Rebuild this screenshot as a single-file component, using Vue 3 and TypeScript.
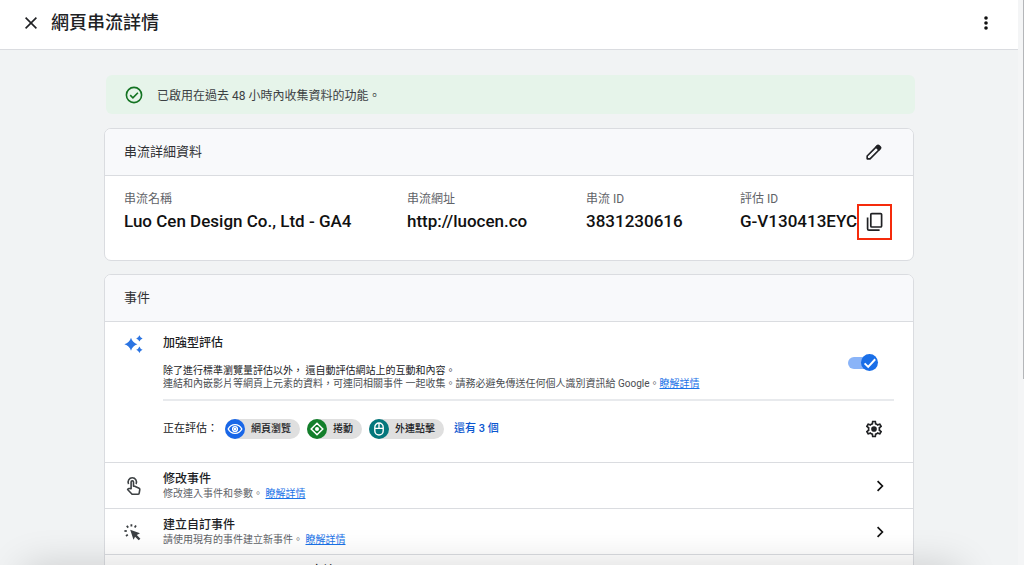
<script setup lang="ts">
import { ref } from 'vue'

interface StreamField {
  label: string
  value: string
}

interface EventRow {
  icon: 'touch' | 'click' | 'key'
  title: string
  text: string
}

const fields: StreamField[] = [
  { label: '串流名稱', value: 'Luo Cen Design Co., Ltd - GA4' },
  { label: '串流網址', value: 'http://luocen.co' },
  { label: '串流 ID', value: '3831230616' },
]
const measurementId = 'G-V130413EYC'

const chips = [
  { kind: 'view', label: '網頁瀏覽' },
  { kind: 'scroll', label: '捲動' },
  { kind: 'outbound', label: '外連點擊' },
]

const rows: EventRow[] = [
  { icon: 'touch', title: '修改事件', text: '修改連入事件和參數。' },
  { icon: 'click', title: '建立自訂事件', text: '請使用現有的事件建立新事件。' },
  { icon: 'key', title: 'Measurement Protocol API 密鑰', text: '' },
]

const enhanced = ref(true)
</script>

<template>
  <div class="page">
    <div class="content">
      <header class="topbar">
        <button class="icon-btn" type="button" aria-label="關閉">
          <svg width="16" height="16" viewBox="0 0 16 16"><path d="M2.6 2.6 13.4 13.4M13.4 2.6 2.6 13.4" fill="none" stroke="#202124" stroke-width="1.6" /></svg>
        </button>
        <h1>網頁串流詳情</h1>
        <button class="icon-btn more" type="button" aria-label="更多選項">
          <svg width="16" height="16" viewBox="0 0 16 16" fill="#111"><circle cx="8" cy="3" r="1.8" /><circle cx="8" cy="8" r="1.8" /><circle cx="8" cy="13" r="1.8" /></svg>
        </button>
      </header>

      <main>
        <div class="banner" role="status">
          <svg width="18" height="18" viewBox="0 0 18 18" fill="none" stroke="#137322" stroke-width="1.6"><circle cx="9" cy="9" r="7.6" /><path d="m5.2 9.2 2.7 2.6 5-5.1" /></svg>
          <span>已啟用在過去 48 小時內收集資料的功能。</span>
        </div>

        <section class="card details">
          <div class="card-head">
            <h2>串流詳細資料</h2>
            <button class="icon-btn" type="button" aria-label="編輯">
              <svg width="18" height="18" viewBox="0 0 20 20" fill="none" stroke="#202124" stroke-width="1.8" stroke-linejoin="round"><path d="M2.4 17.6v-3.2L13.9 2.9q.8-.7 1.5 0l1.7 1.7q.7.7 0 1.5L5.6 17.6z" /><path d="m12.4 4.6 3 3 1.6-1.7-3-3z" fill="#202124" /></svg>
            </button>
          </div>
          <dl class="fields">
            <div v-for="f in fields" :key="f.label">
              <dt>{{ f.label }}</dt>
              <dd>{{ f.value }}</dd>
            </div>
            <div class="measure">
              <div>
                <dt>評估 ID</dt>
                <dd>{{ measurementId }}</dd>
              </div>
              <button class="copy" type="button" aria-label="複製評估 ID">
                <svg width="20" height="20" viewBox="0 0 20 20" fill="none" stroke="#202124" stroke-width="1.7"><rect x="5.8" y="1.6" width="10.8" height="13.4" rx="1" /><path d="M2.6 5.6v11.2q0 1.4 1.4 1.4H14.6" /></svg>
              </button>
            </div>
          </dl>
        </section>

        <section class="card">
          <div class="card-head">
            <h2>事件</h2>
          </div>

          <div class="enhanced">
            <svg class="lead" width="20" height="20" viewBox="0 0 20 20" fill="#2b74e2"><path d="M7 3.8Q8.4 8.6 13.4 10.2 8.4 11.8 7 16.8 5.6 11.8.4 10.2 5.6 8.6 7 3.8z" /><path d="M15.4 1.2q.8 2.4 3.2 3.2-2.4.8-3.2 3.2-.8-2.4-3.2-3.2 2.4-.8 3.2-3.2zM15.4 12.6q.8 2.4 3.2 3.2-2.4.8-3.2 3.2-.8-2.4-3.2-3.2 2.4-.8 3.2-3.2z" /></svg>
            <div class="enhanced-body">
              <div class="intro">
                <div>
                  <h3>加強型評估</h3>
                  <p><span class="strong">除了進行標準瀏覽量評估以外， 還自動評估網站上的互動和內容。</span><br>連結和內嵌影片等網頁上元素的資料，可連同相關事件 一起收集。請務必避免傳送任何個人識別資訊給 Google。<a href="#">瞭解詳情</a></p>
                </div>
                <label class="toggle">
                  <input v-model="enhanced" type="checkbox" aria-label="加強型評估">
                  <span class="knob">
                    <svg width="16" height="16" viewBox="0 0 16 16"><path d="m2.6 8.4 3.6 3.5 7-7.6" fill="none" stroke="#fff" stroke-width="2" /></svg>
                  </span>
                </label>
              </div>
              <div class="measuring">
                <span>正在評估：</span>
                <ul>
                  <li v-for="c in chips" :key="c.kind">
                    <span class="dot" :class="c.kind">
                      <svg v-if="c.kind === 'view'" width="16" height="16" viewBox="0 0 16 16" fill="none" stroke="#fff" stroke-width="1.4"><path d="M1.2 8Q3.4 3.6 8 3.6T14.8 8Q12.6 12.4 8 12.4T1.2 8z" /><circle cx="8" cy="8" r="2.4" /><circle cx="8" cy="8" r=".6" fill="#fff" /></svg>
                      <svg v-else-if="c.kind === 'scroll'" width="16" height="16" viewBox="0 0 16 16" fill="none" stroke="#fff" stroke-width="1.5"><path d="M5 5.2 8 2.2l3 3M10.8 5 13.8 8l-3 3M11 10.8l-3 3-3-3M5.2 11l-3-3 3-3" /><circle cx="8" cy="8" r="2" fill="#fff" stroke="none" /></svg>
                      <svg v-else width="16" height="16" viewBox="0 0 16 16" fill="none" stroke="#fff" stroke-width="1.4"><rect x="3.8" y="2" width="8.4" height="12" rx="4.2" /><path d="M3.8 7.4h8.4M8 2v5.4" /></svg>
                    </span>
                    {{ c.label }}
                  </li>
                </ul>
                <button class="text-btn" type="button">還有 3 個</button>
                <button class="icon-btn gear" type="button" aria-label="設定">
                  <svg width="20" height="20" viewBox="0 0 24 24" fill="#202124"><path d="M19.43 12.98c.04-.32.07-.64.07-.98s-.03-.66-.07-.98l2.11-1.65c.19-.15.24-.42.12-.64l-2-3.46c-.09-.16-.26-.25-.44-.25-.06 0-.12.01-.17.03l-2.49 1c-.52-.4-1.08-.73-1.69-.98l-.38-2.65C14.46 2.18 14.25 2 14 2h-4c-.25 0-.46.18-.49.42l-.38 2.65c-.61.25-1.17.59-1.69.98l-2.49-1c-.06-.02-.12-.03-.18-.03-.17 0-.34.09-.43.25l-2 3.46c-.13.22-.07.49.12.64l2.11 1.65c-.04.32-.07.65-.07.98s.03.66.07.98l-2.11 1.65c-.19.15-.24.42-.12.64l2 3.46c.09.16.26.25.44.25.06 0 .12-.01.17-.03l2.49-1c.52.4 1.08.73 1.69.98l.38 2.65c.03.24.24.42.49.42h4c.25 0 .46-.18.49-.42l.38-2.65c.61-.25 1.17-.59 1.69-.98l2.49 1c.06.02.12.03.18.03.17 0 .34-.09.43-.25l2-3.46c.12-.22.07-.49-.12-.64l-2.11-1.65zm-1.98-1.71c.04.31.05.52.05.73s-.02.43-.05.73l-.14 1.13.89.7 1.08.84-.7 1.21-1.27-.51-1.04-.42-.9.68c-.43.32-.84.56-1.25.73l-1.06.43-.16 1.13-.2 1.35h-1.4l-.19-1.35-.16-1.13-1.06-.43c-.43-.18-.83-.41-1.23-.71l-.91-.7-1.06.43-1.27.51-.7-1.21 1.08-.84.89-.7-.14-1.13c-.03-.31-.05-.54-.05-.74s.02-.43.05-.73l.14-1.13-.89-.7-1.08-.84.7-1.21 1.27.51 1.04.42.9-.68c.43-.32.84-.56 1.25-.73l1.06-.43.16-1.13.2-1.35h1.39l.19 1.35.16 1.13 1.06.43c.43.18.83.41 1.23.71l.91.7 1.06-.43 1.27-.51.7 1.21-1.07.85-.89.7.14 1.13z" /><circle cx="12" cy="12" r="3.4" /></svg>
                </button>
              </div>
            </div>
          </div>

          <div v-for="r in rows" :key="r.title" class="row">
            <svg v-if="r.icon === 'touch'" class="lead" width="20" height="20" viewBox="0 0 20 20" fill="none" stroke="#3c4043" stroke-width="1.6" stroke-linejoin="round"><path d="M4.6 8a4.2 4.2 0 1 1 7.4 0" /><path d="M7.1 12.6V5.9q0-1.2 1.2-1.2t1.2 1.2v4.3h1.2l4.4 2q.9.5.7 1.5l-.6 3.4q-.2 1.2-1.4 1.2H8.9q-.8 0-1.3-.6l-4-4.2.7-.8q.4-.3.9-.2z" /></svg>
            <svg v-else-if="r.icon === 'click'" class="lead" width="20" height="20" viewBox="0 0 20 20" fill="#3c4043"><path d="m6.2 7.8 9.8 3.5-3.2 1.8 3.6 3.6-1.7 1.6-3.6-3.6-1.6 3z" /><path d="M7.4 2.2v2.4M2.8 3.8l1.4 1.8M12 3.6l-1.3 1.9M.4 8.8l2.4.4M2 14l1.8-1.4" fill="none" stroke="#3c4043" stroke-width="1.8" /></svg>
            <svg v-else class="lead" width="20" height="20" viewBox="0 0 20 20" fill="none" stroke="#3c4043" stroke-width="1.6"><circle cx="6" cy="10" r="3.4" /><path d="M9.4 10H18v3.4M14.6 10v3" /></svg>
            <div class="row-text">
              <h3>{{ r.title }}</h3>
              <p>{{ r.text }} <a href="#">瞭解詳情</a></p>
            </div>
            <button class="icon-btn" type="button" :aria-label="r.title">
              <svg width="16" height="16" viewBox="0 0 16 16"><path d="m5.6 3.2 4.8 4.8-4.8 4.8" fill="none" stroke="#111" stroke-width="1.7" /></svg>
            </button>
          </div>
        </section>
      </main>
    </div>
    <div class="rail"><div class="thumb"></div></div>
    <div class="shade"></div>
  </div>
</template>

<style>
body {
  margin: 0;
  overflow: hidden;
}
</style>

<style scoped>
.page {
  position: relative;
  display: grid;
  grid-template-columns: minmax(0, 1fr) 6px;
  height: 100vh;
  overflow: hidden;
  background: #f1f3f4;
  color: #202124;
  font-family: Roboto, "Noto Sans CJK TC", sans-serif;
}
.content {
  overflow: hidden;
}
h1, h2, h3, p, dl, dd, ul {
  margin: 0;
  padding: 0;
}
button {
  border: 0;
  padding: 0;
  background: none;
  font: inherit;
  cursor: pointer;
}
svg {
  display: block;
  flex: none;
}
a {
  color: #1a73e8;
}
.icon-btn {
  display: flex;
  flex: none;
}
.topbar {
  display: flex;
  align-items: center;
  gap: 12px;
  height: 50px;
  padding: 0 24px 4px 23px;
  box-sizing: border-box;
  background: #fff;
  border-bottom: 1px solid #dadce0;
}
h1 {
  font-size: 18px;
  line-height: 24px;
  font-weight: 500;
}
.more {
  margin-left: auto;
}
main {
  max-width: 810px;
  margin: 0 auto;
  padding-top: 25px;
}
.banner {
  display: flex;
  align-items: center;
  gap: 14px;
  height: 39px;
  margin: 0 -1px 14px 2px;
  padding: 0 19px;
  border-radius: 6px;
  background: #e6f4ea;
  color: #3c4043;
  font-size: 12px;
}
.card {
  margin-bottom: 13px;
  border: 1px solid #dadce0;
  border-radius: 7px;
  background: #fff;
  overflow: hidden;
}
.card-head {
  display: flex;
  align-items: center;
  justify-content: space-between;
  height: 46px;
  padding: 0 30px 0 19px;
  background: #f8f9fb;
  border-bottom: 1px solid #dadce0;
}
h2 {
  color: #303134;
  font-size: 13px;
  line-height: 20px;
  font-weight: 400;
}
.fields {
  display: grid;
  grid-template-columns: 283fr 179fr 154fr 173fr;
  padding: 13px 0 27px 19px;
}
dt {
  color: #5f6368;
  font-size: 12px;
  line-height: 20px;
}
dd {
  color: #111;
  font-size: 17px;
  line-height: 24px;
  font-weight: 500;
  white-space: nowrap;
}
.measure {
  display: flex;
  align-items: flex-end;
}
.copy {
  display: grid;
  place-items: center;
  flex: none;
  width: 35px;
  height: 36px;
  margin-bottom: -7px;
  border: 2px solid #f52b0c;
}
.enhanced {
  display: flex;
  gap: 19px;
  padding: 12px 19px 23px;
}
.enhanced-body {
  flex: 1;
  min-width: 0;
}
h3 {
  font-size: 12px;
  line-height: 18px;
  font-weight: 500;
}
.intro {
  display: flex;
  align-items: center;
  justify-content: space-between;
  padding-bottom: 9px;
  border-bottom: 2px solid #e8eaed;
}
p {
  color: #5f6368;
  font-size: 10px;
  line-height: 13px;
}
.intro p {
  margin-top: 12px;
  color: #4a4d51;
}
.intro .strong {
  color: #202124;
}
.toggle {
  position: relative;
  flex: none;
  width: 30px;
  height: 18px;
  margin: 2px 16px 0 0;
}
.toggle input {
  appearance: none;
  display: block;
  width: 26px;
  height: 12px;
  margin: 3px 0;
  border-radius: 6px;
  background: #bdc1c6;
}
.toggle input:checked {
  background: #8ab4f8;
}
.knob {
  position: absolute;
  top: 0;
  left: 0;
  display: grid;
  place-items: center;
  width: 17px;
  height: 17px;
  border-radius: 50%;
  background: #5f6368;
  pointer-events: none;
}
.toggle input:checked + .knob {
  left: auto;
  right: 0;
  background: #1a6fe8;
}
.measuring {
  display: flex;
  align-items: center;
  margin-top: 18px;
  padding-right: 10px;
  font-size: 11px;
  line-height: 20px;
}
.measuring ul {
  display: flex;
  gap: 7px;
  margin: 0 10px 0 7px;
  list-style: none;
}
.measuring li {
  display: flex;
  align-items: center;
  gap: 6px;
  padding-right: 9px;
  border-radius: 10px;
  background: #dfdfdf;
  font-size: 10px;
  font-weight: 500;
}
.dot {
  display: grid;
  place-items: center;
  width: 20px;
  height: 20px;
  border-radius: 50%;
}
.view {
  background: #1967e8;
}
.scroll {
  background: #137f2b;
}
.outbound {
  background: #04777c;
}
.text-btn {
  color: #0b57d0;
  font-weight: 500;
}
.gear {
  margin-left: auto;
}
.row {
  display: flex;
  align-items: center;
  gap: 19px;
  min-height: 45px;
  padding: 0 25px 0 19px;
  border-top: 1px solid #dadce0;
}
.row-text {
  flex: 1;
}
.row h3 {
  line-height: 16px;
}
.rail {
  background: #f4f5f6;
}
.thumb {
  height: 67vh;
  border-right: 1px solid #b4b6b9;
}
.shade {
  position: absolute;
  left: 30px;
  right: 70px;
  bottom: -30px;
  height: 20px;
  box-shadow: 0 0 40px 6px rgba(0, 0, 0, 0.2);
  pointer-events: none;
}
</style>
